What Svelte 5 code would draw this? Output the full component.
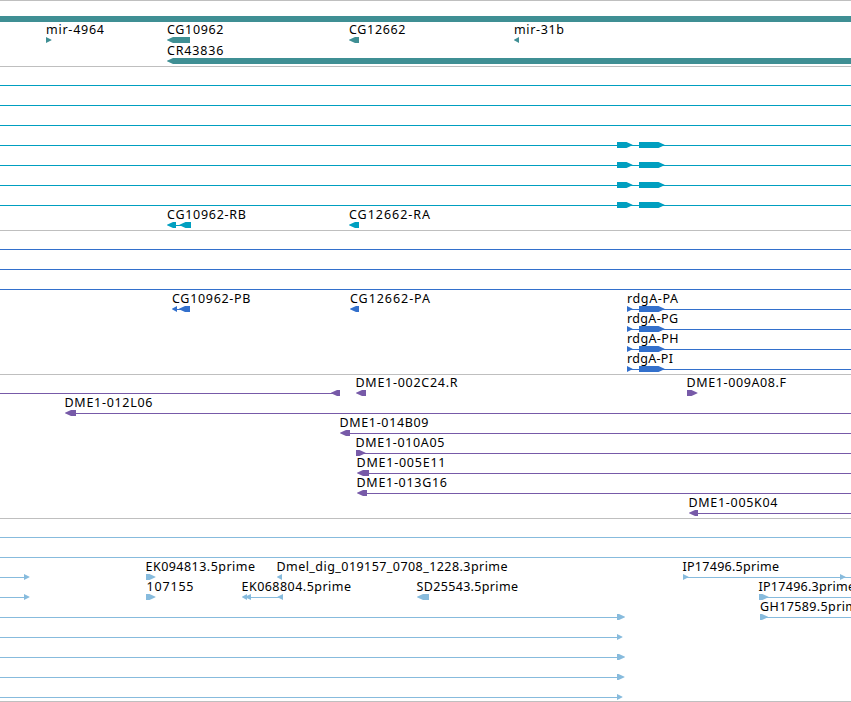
<script>
    // positions are in pixels along the visible region
    // shapes: [start, end, direction], lines: [start, end], labels: [x, width, text]
    const END = 851
    const HEAD = 6

    const line = (from = 0, to = END) => ({ lines: [[from, to]] })

    const rdgaExons = [[617, 632.5, 1], [639, 664.5, 1]]
    const rdgaCds = [[627, 632.5, 1], [639, 664.5, 1]]

    const tracks = [
        {
            name: 'gene',
            rows: [
                { bars: [[0, END]] },
                {
                    shapes: [[46, 51.5, 1], [167, 190, -1], [349, 359, -1], [514, 519, -1]],
                    labels: [[46, 58, 'mir-4964'], [167, 56.5, 'CG10962'], [349, 56.5, 'CG12662'], [514, 50, 'mir-31b']]
                },
                { shapes: [[167, 860, -1]], labels: [[167, 56.5, 'CR43836']] }
            ]
        },
        {
            name: 'transcript',
            rows: [
                line(),
                line(),
                line(),
                { ...line(), shapes: rdgaExons },
                { ...line(), shapes: rdgaExons },
                { ...line(), shapes: rdgaExons },
                { ...line(), shapes: rdgaExons },
                {
                    lines: [[175, 181]],
                    shapes: [[167, 176, -1], [179.5, 191, -1], [349, 359, -1]],
                    labels: [[167, 79, 'CG10962-RB'], [349, 81, 'CG12662-RA']]
                }
            ]
        },
        {
            name: 'protein',
            rows: [
                line(),
                line(),
                line(),
                {
                    lines: [[176, 181], [627, END]],
                    shapes: [[172, 177, -1], [179, 190, -1], [350, 359, -1], ...rdgaCds],
                    labels: [[172, 78.5, 'CG10962-PB'], [350, 80, 'CG12662-PA'], [627, 51, 'rdgA-PA']]
                },
                { ...line(627), shapes: rdgaCds, labels: [[627, 51, 'rdgA-PG']] },
                { ...line(627), shapes: rdgaCds, labels: [[627, 51.5, 'rdgA-PH']] },
                { ...line(627), shapes: rdgaCds, labels: [[627, 46, 'rdgA-PI']] }
            ]
        },
        {
            name: 'clone',
            rows: [
                {
                    lines: [[0, 333]],
                    shapes: [[331, 340, -1], [356, 366, -1], [687, 697.5, 1]],
                    labels: [[355.5, 102, 'DME1-002C24.R'], [686.5, 99.5, 'DME1-009A08.F']]
                },
                { ...line(70), shapes: [[65, 76, -1]], labels: [[64.5, 88, 'DME1-012L06']] },
                { ...line(345), shapes: [[340, 350, -1]], labels: [[339.5, 89, 'DME1-014B09']] },
                { ...line(356), shapes: [[356, 365.5, 1]], labels: [[355.5, 89, 'DME1-010A05']] },
                { ...line(362), shapes: [[357, 369, -1]], labels: [[356.5, 89, 'DME1-005E11']] },
                { ...line(362), shapes: [[357, 367, -1]], labels: [[356.5, 90.5, 'DME1-013G16']] },
                { ...line(694), shapes: [[689, 698, -1]], labels: [[688.5, 89, 'DME1-005K04']] }
            ]
        },
        {
            name: 'est',
            rows: [
                line(),
                line(),
                {
                    lines: [[0, 25], [683, END]],
                    shapes: [[24, 29.5, 1], [146, 155.5, 1], [277, 282, -1], [683, 688.5, 1], [840, 845.5, 1]],
                    labels: [[145.5, 109.5, 'EK094813.5prime'], [276.5, 231, 'Dmel_dig_019157_0708_1228.3prime'], [682.5, 96.5, 'IP17496.5prime']]
                },
                {
                    lines: [[0, 25], [246, 279], [760, END]],
                    shapes: [[24, 29.5, 1], [146, 155.5, 1], [242, 247, -1], [245, 251, -1], [277.5, 283, -1], [417, 429, -1], [759, 768.5, 1]],
                    labels: [[146.5, 47, '107155'], [241.5, 109.5, 'EK068804.5prime'], [416.5, 101.5, 'SD25543.5prime'], [758.5, 96.5, 'IP17496.3prime']]
                },
                {
                    lines: [[0, 618], [760, END]],
                    shapes: [[617, 625, 1], [760, 768, 1]],
                    labels: [[760, 104.5, 'GH17589.5prime']]
                },
                { ...line(0, 618), shapes: [[617, 622.5, 1]] },
                { ...line(0, 618), shapes: [[617, 625, 1]] },
                { ...line(0, 618), shapes: [[617, 624.5, 1]] },
                { ...line(0, 618), shapes: [[617, 622.5, 1]] }
            ]
        }
    ]

    function arrow([start, end, dir]) {
        const head = Math.min(HEAD, end - start)
        if (dir > 0) {
            const neck = end - head
            return `${start},15 ${neck},15 ${end},17.7 ${end},18.3 ${neck},21 ${start},21`
        }
        const neck = start + head
        return `${end},15 ${neck},15 ${start},17.7 ${start},18.3 ${neck},21 ${end},21`
    }
</script>

<main>
    {#each tracks as track}
        <section class="track {track.name}">
            {#each track.rows as row}
                <svg class="row">
                    {#each row.bars ?? [] as [from, to]}
                        <rect x={from} y="15" width={to - from} height="6" />
                    {/each}
                    {#each row.lines ?? [] as [from, to]}
                        <rect x={from} y="18" width={to - from} height="1" />
                    {/each}
                    {#each row.shapes ?? [] as shape}
                        <polygon points={arrow(shape)} />
                    {/each}
                    {#each row.labels ?? [] as [x, width, text]}
                        <text {x} y="12" textLength={width}>{text}</text>
                    {/each}
                </svg>
            {/each}
        </section>
    {/each}
</main>

<style>
    :global(body) {
        background: #fff;
    }
    main {
        width: 851px;
        height: 702px;
        overflow: hidden;
        box-sizing: border-box;
        border-top: 1px solid #bfbfbf;
    }
    .track {
        padding-bottom: 3px;
        border-bottom: 1px solid #bfbfbf;
    }
    .row {
        display: block;
        width: 100%;
        height: 20px;
        overflow: visible;
    }
    .gene {
        padding-bottom: 2px;
        fill: #3f8f94;
    }
    .gene .row {
        height: 21px;
    }
    .transcript {
        fill: #009fc0;
    }
    .protein {
        fill: #3370cc;
    }
    .clone {
        fill: #775aa8;
    }
    .est {
        padding-bottom: 2px;
        fill: #87bbdd;
    }
    text {
        font-family: 'Lucida Sans', 'Noto Sans', sans-serif;
        font-size: 12.5px;
        fill: #000;
    }
</style>
